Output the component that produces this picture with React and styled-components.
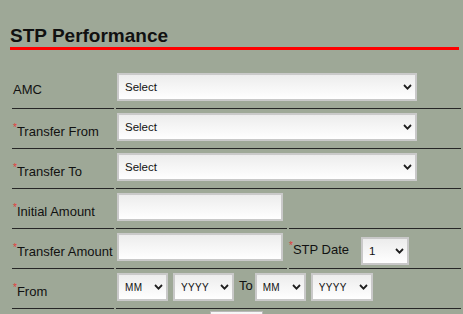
import styled, { createGlobalStyle } from 'styled-components';

const GlobalStyle = createGlobalStyle`
  html, body {
    margin: 0;
    padding: 0;
    background: #9ea897;
  }

  body {
    font-family: "Liberation Sans", Arial, sans-serif;
    color: #111;
  }
`;

const Page = styled.div`
  padding-top: 24px;
  height: 314px;
  box-sizing: border-box;
  overflow: hidden;
`;

const Title = styled.h2`
  margin: 0 0 0 10px;
  width: 449px;
  font-size: 19px;
  line-height: 23px;
  font-weight: bold;
  color: #111;
  border-bottom: 3px solid #ff0000;
`;

const Form = styled.div`
  margin: 19px 0 0 12px;
  width: 449px;
  display: grid;
  grid-template-columns: 102px 171px 172px;
  column-gap: 2px;
`;

const Cell = styled.div`
  box-sizing: border-box;
  height: 40px;
  border-bottom: 1px solid #262626;
  grid-column: ${(p) => (p.$span ? `span ${p.$span}` : 'auto')};
`;

const LabelCell = styled(Cell)`
  padding: ${(p) => (p.$req ? 15 : 13)}px 0 0 1px;
  font-size: 13px;
  line-height: 15px;
  white-space: nowrap;
`;

const ValueCell = styled(Cell)`
  padding: 4px 0 0 1px;
  display: flex;
  align-items: flex-start;
`;

const InlineCell = styled(Cell)`
  padding-top: 4px;
  display: flex;
  align-items: center;
  align-self: start;
  height: 40px;
`;

const InlineLabel = styled.span`
  font-size: 13px;
  line-height: 15px;
  margin-top: -2px;
  margin-right: ${(p) => p.$gap || 0}px;
  margin-left: ${(p) => p.$left || 0}px;
  white-space: nowrap;
`;

const Star = styled.span`
  color: #e23b3b;
  font-size: 10px;
  line-height: 10px;
  vertical-align: top;
  position: relative;
  top: -1px;
`;

const SelectWrap = styled.div`
  position: relative;
  width: ${(p) => p.$w}px;
  height: 28px;
  margin-left: ${(p) => p.$ml || 0}px;
  flex: none;

  svg {
    position: absolute;
    right: 5px;
    top: 11px;
    pointer-events: none;
  }
`;

const Select = styled.select`
  appearance: none;
  -webkit-appearance: none;
  width: 100%;
  height: 100%;
  box-sizing: border-box;
  border: 2px solid #c9c9c9;
  border-radius: 0;
  background: linear-gradient(#ececec, #ffffff);
  padding: 0 0 0 6px;
  font-family: "Liberation Sans", Arial, sans-serif;
  font-size: ${(p) => (p.$small ? 10 : 11.5)}px;
  letter-spacing: ${(p) => (p.$small ? 0.3 : 0)}px;
  color: #111;
  outline: none;
`;

const Input = styled.input`
  width: 166px;
  height: 28px;
  box-sizing: border-box;
  border: 2px solid #c9c9c9;
  background: linear-gradient(#ececec, #ffffff);
  padding: 0 6px;
  font-family: "Liberation Sans", Arial, sans-serif;
  font-size: 12px;
  outline: none;
`;

const ButtonRow = styled.div`
  grid-column: 1 / -1;
  display: flex;
  justify-content: center;
  padding-top: 2px;
`;

const Button = styled.button`
  width: 53px;
  height: 26px;
  border: 1px solid #b8b8b8;
  background: linear-gradient(#f7f7f7, #dddddd);
  font-family: "Liberation Sans", Arial, sans-serif;
  font-size: 12px;
  color: #111;
`;

function Chevron() {
  return (
    <svg width="9" height="6" viewBox="0 0 9 6">
      <polyline points="1,1 4.5,4.6 8,1" fill="none" stroke="#1e1e1e" strokeWidth="1.8" />
    </svg>
  );
}

function Dropdown({ width, options, small, ml }) {
  return (
    <SelectWrap $w={width} $ml={ml}>
      <Select $small={small}>
        {options.map((o) => (
          <option key={o}>{o}</option>
        ))}
      </Select>
      <Chevron />
    </SelectWrap>
  );
}

function Label({ req, children }) {
  return (
    <LabelCell $req={req}>
      {req && <Star>*</Star>}
      {children}
    </LabelCell>
  );
}

const months = ['MM', '01', '02', '03', '04', '05', '06', '07', '08', '09', '10', '11', '12'];
const years = ['YYYY', '2024', '2023', '2022', '2021', '2020'];
const days = ['1', '5', '10', '15', '20', '25'];

export default function App() {
  return (
    <Page>
      <GlobalStyle />
      <Title>STP Performance</Title>
      <Form>
        <Label>AMC</Label>
        <ValueCell $span={2}>
          <Dropdown width={300} options={['Select']} />
        </ValueCell>

        <Label req>Transfer From</Label>
        <ValueCell $span={2}>
          <Dropdown width={300} options={['Select']} />
        </ValueCell>

        <Label req>Transfer To</Label>
        <ValueCell $span={2}>
          <Dropdown width={300} options={['Select']} />
        </ValueCell>

        <Label req>Initial Amount</Label>
        <ValueCell>
          <Input type="text" />
        </ValueCell>
        <Cell />

        <Label req>Transfer Amount</Label>
        <ValueCell>
          <Input type="text" />
        </ValueCell>
        <InlineCell>
          <InlineLabel $gap={12}>
            <Star>*</Star>STP Date
          </InlineLabel>
          <Dropdown width={48} options={days} />
        </InlineCell>

        <Label req>From</Label>
        <ValueCell $span={2}>
          <Dropdown width={51} options={months} small />
          <Dropdown width={61} options={years} small ml={5} />
          <InlineLabel $left={5} $gap={2} style={{ marginTop: 5 }}>To</InlineLabel>
          <Dropdown width={51} options={months} small />
          <Dropdown width={62} options={years} small ml={5} />
        </ValueCell>

        <ButtonRow>
          <Button>Go</Button>
        </ButtonRow>
      </Form>
    </Page>
  );
}
